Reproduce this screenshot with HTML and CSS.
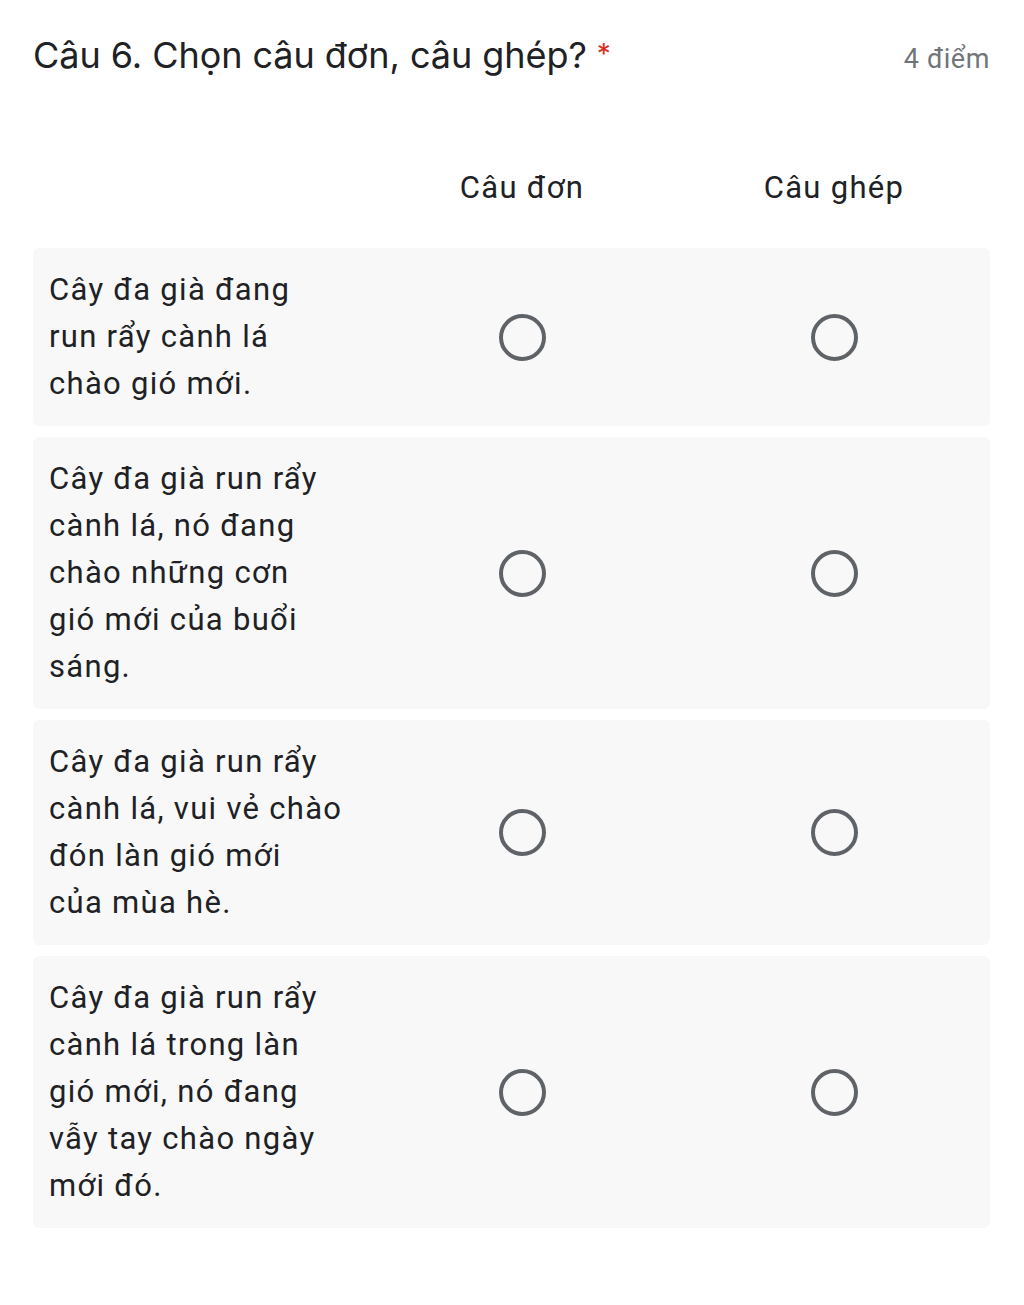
FILE: index.html
```html
<!DOCTYPE html>
<html lang="vi">
<head>
<meta charset="utf-8">
<title>Câu 6</title>
<link rel="stylesheet" href="styles.css">
</head>
<body>
<div class="question">
  <div class="q-head">
    <div class="q-title">Câu 6. Chọn câu đơn, câu ghép?<span class="req">*</span></div>
    <div class="q-points">4 điểm</div>
  </div>
  <div class="grid">
    <div class="grid-head">
      <div class="cell-label"></div>
      <div class="col-title">Câu đơn</div>
      <div class="col-title">Câu ghép</div>
    </div>
    <div class="grid-row">
      <div class="cell-label">Cây đa già đang<br>run rẩy cành lá<br>chào gió mới.</div>
      <div class="cell"><span class="radio"></span></div>
      <div class="cell"><span class="radio"></span></div>
    </div>
    <div class="grid-row">
      <div class="cell-label">Cây đa già run rẩy<br>cành lá, nó đang<br>chào những cơn<br>gió mới của buổi<br>sáng.</div>
      <div class="cell"><span class="radio"></span></div>
      <div class="cell"><span class="radio"></span></div>
    </div>
    <div class="grid-row">
      <div class="cell-label">Cây đa già run rẩy<br>cành lá, vui vẻ chào<br>đón làn gió mới<br>của mùa hè.</div>
      <div class="cell"><span class="radio"></span></div>
      <div class="cell"><span class="radio"></span></div>
    </div>
    <div class="grid-row">
      <div class="cell-label">Cây đa già run rẩy<br>cành lá trong làn<br>gió mới, nó đang<br>vẫy tay chào ngày<br>mới đó.</div>
      <div class="cell"><span class="radio"></span></div>
      <div class="cell"><span class="radio"></span></div>
    </div>
  </div>
</div>
</body>
</html>
```
FILE: styles.css
```css
html, body {
  margin: 0;
  padding: 0;
  background: #ffffff;
}

body {
  font-family: Roboto, "Noto Sans", "Liberation Sans", sans-serif;
  color: #202124;
}

.question {
  padding: 30px 34px 40px 33px;
}

.q-head {
  display: flex;
  justify-content: space-between;
  align-items: baseline;
}

.q-title {
  font-family: Inter, "Open Sans", Roboto, sans-serif;
  font-size: 36px;
  line-height: 48px;
  letter-spacing: -0.05px;
  color: #202124;
}

.req {
  color: #d93025;
  padding-left: 10px;
  font-size: 28px;
  vertical-align: 4px;
}

.q-points {
  font-size: 27px;
  letter-spacing: 0.6px;
  color: #70757a;
}

.grid {
  margin-top: 85px;
  display: flex;
  flex-direction: column;
  gap: 11px;
}

.grid-head,
.grid-row {
  display: grid;
  grid-template-columns: 333px 1fr 1fr;
  align-items: center;
}

.grid-head {
  margin-bottom: 26px;
}

.col-title {
  text-align: center;
  font-size: 31px;
  letter-spacing: 1.3px;
  line-height: 47px;
  color: #202124;
}

.grid-row {
  background: #f8f8f8;
  border-radius: 6px;
}

.cell-label {
  font-size: 31px;
  letter-spacing: 1.3px;
  line-height: 47px;
  padding: 18px 0 19px 16px;
  white-space: nowrap;
  color: #202124;
}

.cell {
  display: flex;
  justify-content: center;
  align-items: center;
}

.radio {
  display: block;
  box-sizing: border-box;
  width: 47px;
  height: 47px;
  border: 4.5px solid #5f6368;
  border-radius: 50%;
}
```
